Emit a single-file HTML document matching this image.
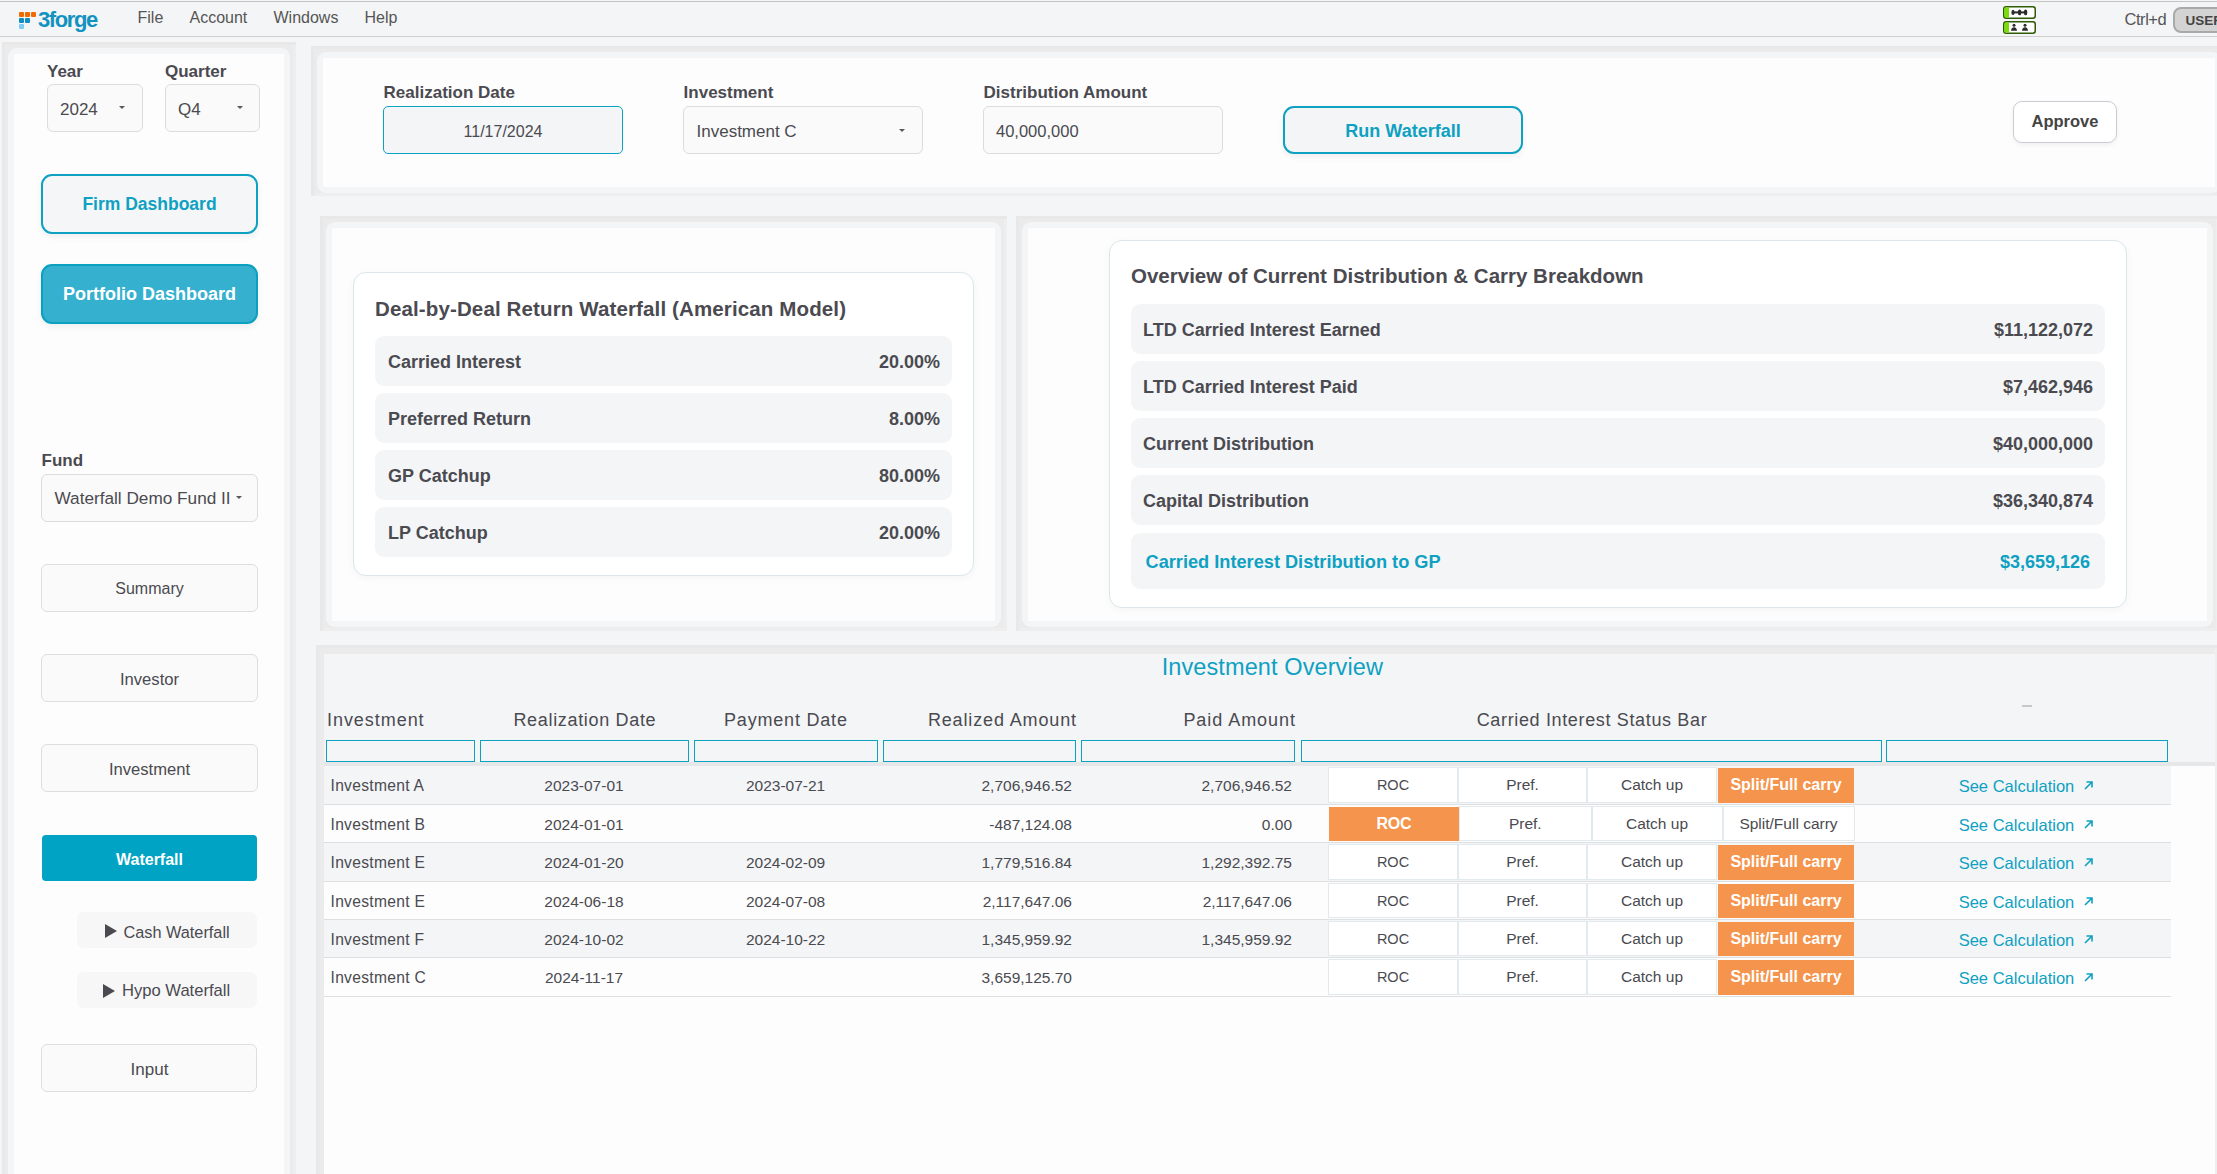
<!DOCTYPE html>
<html><head><meta charset="utf-8"><title>Waterfall</title>
<style>
html,body{margin:0;padding:0;}
body{width:2217px;height:1174px;overflow:hidden;position:relative;background:#f4f5f7;font-family:"Liberation Sans",sans-serif;}
.t{position:absolute;line-height:1;white-space:nowrap;}
</style></head><body>
<div style="position:absolute;left:0px;top:0px;width:2217px;height:36px;background:#f4f5f7;"></div>
<div style="position:absolute;left:0px;top:1px;width:2217px;height:1px;background:#c4c4c4;"></div>
<div style="position:absolute;left:0px;top:36px;width:2217px;height:1px;background:#cfcfcf;"></div>
<div style="position:absolute;left:19px;top:12px;width:5px;height:5px;background:#f06a00;border-radius:1px;"></div>
<div style="position:absolute;left:25px;top:12px;width:5px;height:5px;background:#f06a00;border-radius:1px;"></div>
<div style="position:absolute;left:31px;top:12px;width:5px;height:5px;background:#f06a00;border-radius:1px;"></div>
<div style="position:absolute;left:19px;top:18px;width:5px;height:5px;background:#0f8fbf;border-radius:1px;"></div>
<div style="position:absolute;left:25px;top:18px;width:5px;height:5px;background:#0f8fbf;border-radius:1px;"></div>
<div style="position:absolute;left:19px;top:24px;width:5px;height:5px;background:#7fcdf5;border-radius:1px;"></div>
<div class="t" style="left:38px;top:9.37px;font-size:22px;font-weight:700;color:#1192bf;letter-spacing:-1.4px;">3forge</div>
<div class="t" style="left:137.5px;top:9.95px;font-size:16px;font-weight:400;color:#555555;">File</div>
<div class="t" style="left:189.5px;top:9.95px;font-size:16px;font-weight:400;color:#555555;">Account</div>
<div class="t" style="left:273.5px;top:9.95px;font-size:16px;font-weight:400;color:#555555;">Windows</div>
<div class="t" style="left:364.5px;top:9.95px;font-size:16px;font-weight:400;color:#555555;">Help</div>
<div class="t" style="left:2124.5px;top:11.03px;font-size:16.5px;font-weight:400;color:#555555;letter-spacing:-0.45px;">Ctrl+d</div>
<div style="position:absolute;left:2173px;top:7px;width:67px;height:26px;background:#d3d3d3;border:2px solid #a9a9a9;border-radius:8px;box-sizing:border-box;"></div>
<div class="t" style="left:2185.5px;top:13.57px;font-size:13.5px;font-weight:700;color:#444444;">USER</div>
<svg style="position:absolute;left:2003px;top:6px" width="34" height="28" viewBox="0 0 34 28">
<rect x="0.75" y="0.75" width="31.5" height="11.5" rx="2.5" fill="#fff" stroke="#2f5a06" stroke-width="1.5"/>
<rect x="1.5" y="1.5" width="4.5" height="10" fill="#77e000"/>
<rect x="0.75" y="15.75" width="31.5" height="11.5" rx="2.5" fill="#fff" stroke="#2f5a06" stroke-width="1.5"/>
<rect x="1.5" y="16.5" width="4.5" height="10" fill="#77e000"/>
<rect x="9" y="5.4" width="15" height="2" fill="#2b2b2b"/>
<ellipse cx="10" cy="6.4" rx="1.6" ry="2.6" fill="#2b2b2b"/><ellipse cx="16.6" cy="6.4" rx="1.7" ry="2.9" fill="#2b2b2b"/><ellipse cx="22.6" cy="6.4" rx="1.7" ry="2.9" fill="#2b2b2b"/>
<circle cx="11" cy="19.2" r="1.5" fill="#2b2b2b"/><path d="M8 24.8 Q8.3 21.3 11 21.3 Q13.7 21.3 14 24.8 Z" fill="#2b2b2b"/>
<circle cx="22" cy="19.2" r="1.5" fill="#2b2b2b"/><path d="M19 24.8 Q19.3 21.3 22 21.3 Q24.7 21.3 25 24.8 Z" fill="#2b2b2b"/>
</svg>
<div style="position:absolute;left:2px;top:42px;width:294px;height:1148px;background:#ebebeb;border-style:solid;border-width:0;box-shadow:inset 3px 3px 0 #e8e8e8, inset -3px -3px 0 #eeeeee;"></div>
<div style="position:absolute;left:8px;top:48px;width:282px;height:1136px;background:#f4f5f7;border-radius:9px;"></div>
<div style="position:absolute;left:14px;top:54px;width:270px;height:1124px;background:#fdfdfd;"></div>
<div style="position:absolute;left:311px;top:46px;width:1916px;height:150px;background:#ebebeb;border-style:solid;border-width:0;box-shadow:inset 3px 3px 0 #e8e8e8, inset -3px -3px 0 #eeeeee;"></div>
<div style="position:absolute;left:317px;top:52px;width:1904px;height:141px;background:#f4f5f7;border-radius:9px;"></div>
<div style="position:absolute;left:323px;top:58px;width:1892px;height:129px;background:#fdfdfd;"></div>
<div style="position:absolute;left:320px;top:216px;width:687px;height:415px;background:#ebebeb;border-style:solid;border-width:0;box-shadow:inset 3px 3px 0 #e8e8e8, inset -3px -3px 0 #eeeeee;"></div>
<div style="position:absolute;left:326px;top:222px;width:675px;height:405px;background:#f4f5f7;border-radius:9px;"></div>
<div style="position:absolute;left:332px;top:228px;width:663px;height:393px;background:#fdfdfd;"></div>
<div style="position:absolute;left:1016px;top:216px;width:1203px;height:415px;background:#ebebeb;border-style:solid;border-width:0;box-shadow:inset 3px 3px 0 #e8e8e8, inset -3px -3px 0 #eeeeee;"></div>
<div style="position:absolute;left:1022px;top:222px;width:1191px;height:405px;background:#f4f5f7;border-radius:9px;"></div>
<div style="position:absolute;left:1028px;top:228px;width:1179px;height:393px;background:#fdfdfd;"></div>
<div style="position:absolute;left:316px;top:645px;width:1901px;height:545px;background:#ebebeb;border-style:solid;border-width:0;box-shadow:inset 3px 3px 0 #e8e8e8, inset -3px -3px 0 #eeeeee;"></div>
<div style="position:absolute;left:324px;top:654px;width:1891px;height:536px;background:#f4f5f7;"></div>
<div class="t" style="left:47px;top:62.61px;font-size:17px;font-weight:700;color:#4a4a50;">Year</div>
<div class="t" style="left:165px;top:62.61px;font-size:17px;font-weight:700;color:#4a4a50;">Quarter</div>
<div style="position:absolute;left:47px;top:84px;width:96px;height:48px;background:#fafafa;border:1px solid #dcdcdc;border-radius:6px;box-sizing:border-box;"></div>
<div class="t" style="left:60px;top:100.61px;font-size:17px;font-weight:400;color:#4a4a50;">2024</div>
<div style="position:absolute;left:119px;top:105.5px;width:0;height:0;border-left:3.1px solid transparent;border-right:3.1px solid transparent;border-top:3.4px solid #56565c;"></div>
<div style="position:absolute;left:165px;top:84px;width:95px;height:48px;background:#fafafa;border:1px solid #dcdcdc;border-radius:6px;box-sizing:border-box;"></div>
<div class="t" style="left:178px;top:100.61px;font-size:17px;font-weight:400;color:#4a4a50;">Q4</div>
<div style="position:absolute;left:237px;top:105.5px;width:0;height:0;border-left:3.1px solid transparent;border-right:3.1px solid transparent;border-top:3.4px solid #56565c;"></div>
<div style="position:absolute;left:41px;top:174px;width:217px;height:60px;background:#f5f6f8;border:2px solid #0ea1c2;border-radius:11px;box-sizing:border-box;box-shadow:0 3px 6px rgba(0,0,0,0.06);"></div>
<div class="t" style="left:-450.5px;width:1200px;text-align:center;top:196.18px;font-size:17.5px;font-weight:700;color:#0ea1c2;">Firm Dashboard</div>
<div style="position:absolute;left:41px;top:264px;width:217px;height:60px;background:#35b1cf;border:2px solid #0aa0c0;border-radius:11px;box-sizing:border-box;box-shadow:0 3px 6px rgba(0,0,0,0.06);"></div>
<div class="t" style="left:-450.5px;width:1200px;text-align:center;top:284.76px;font-size:18px;font-weight:700;color:#ffffff;">Portfolio Dashboard</div>
<div class="t" style="left:41.5px;top:451.61px;font-size:17px;font-weight:700;color:#4a4a50;">Fund</div>
<div style="position:absolute;left:41px;top:474px;width:217px;height:48px;background:#fafafa;border:1px solid #dcdcdc;border-radius:6px;box-sizing:border-box;"></div>
<div class="t" style="left:54.5px;top:490.44px;font-size:17.2px;font-weight:400;color:#4a4a50;">Waterfall Demo Fund II</div>
<div style="position:absolute;left:235.5px;top:496px;width:0;height:0;border-left:3.1px solid transparent;border-right:3.1px solid transparent;border-top:3.4px solid #56565c;"></div>
<div style="position:absolute;left:41px;top:564px;width:217px;height:48px;background:#fafafa;border:1px solid #dedede;border-radius:6px;box-sizing:border-box;"></div>
<div class="t" style="left:-450.5px;width:1200px;text-align:center;top:581.45px;font-size:16px;font-weight:400;color:#4a4a50;">Summary</div>
<div style="position:absolute;left:41px;top:654px;width:217px;height:48px;background:#fafafa;border:1px solid #dedede;border-radius:6px;box-sizing:border-box;"></div>
<div class="t" style="left:-450.5px;width:1200px;text-align:center;top:671.94px;font-size:16.6px;font-weight:400;color:#4a4a50;">Investor</div>
<div style="position:absolute;left:41px;top:744px;width:217px;height:48px;background:#fafafa;border:1px solid #dedede;border-radius:6px;box-sizing:border-box;"></div>
<div class="t" style="left:-450.5px;width:1200px;text-align:center;top:761.94px;font-size:16.6px;font-weight:400;color:#4a4a50;">Investment</div>
<div style="position:absolute;left:41px;top:1044px;width:216px;height:48px;background:#fafafa;border:1px solid #dedede;border-radius:6px;box-sizing:border-box;"></div>
<div class="t" style="left:-450.5px;width:1200px;text-align:center;top:1061.11px;font-size:17px;font-weight:400;color:#4a4a50;">Input</div>
<div style="position:absolute;left:42px;top:835px;width:215px;height:46px;background:#00a3c4;border-radius:4px;"></div>
<div class="t" style="left:-450.5px;width:1200px;text-align:center;top:851.95px;font-size:16px;font-weight:700;color:#ffffff;">Waterfall</div>
<div style="position:absolute;left:77px;top:912px;width:180px;height:36px;background:#f7f7f8;border-radius:7px;"></div>
<div style="position:absolute;left:105px;top:924px;width:0;height:0;border-top:7px solid transparent;border-bottom:7px solid transparent;border-left:12.5px solid #4a4a50;"></div>
<div class="t" style="left:123.5px;top:923.70px;font-size:16.3px;font-weight:400;color:#4a4a50;">Cash Waterfall</div>
<div style="position:absolute;left:77px;top:972px;width:180px;height:36px;background:#f7f7f8;border-radius:7px;"></div>
<div style="position:absolute;left:103px;top:984px;width:0;height:0;border-top:7px solid transparent;border-bottom:7px solid transparent;border-left:12.5px solid #4a4a50;"></div>
<div class="t" style="left:122px;top:983.44px;font-size:16.6px;font-weight:400;color:#4a4a50;">Hypo Waterfall</div>
<div class="t" style="left:383.6px;top:84.31px;font-size:17px;font-weight:700;color:#4a4a50;">Realization Date</div>
<div style="position:absolute;left:383px;top:106px;width:240px;height:48px;background:#f4f5f7;border:1px solid #0aa3c4;border-radius:5px;box-sizing:border-box;"></div>
<div class="t" style="left:-97px;width:1200px;text-align:center;top:123.95px;font-size:16px;font-weight:400;color:#4a4a50;">11/17/2024</div>
<div class="t" style="left:683.6px;top:84.31px;font-size:17px;font-weight:700;color:#4a4a50;">Investment</div>
<div style="position:absolute;left:683px;top:106px;width:240px;height:48px;background:#fafafa;border:1px solid #dcdcdc;border-radius:6px;box-sizing:border-box;"></div>
<div class="t" style="left:696.5px;top:122.61px;font-size:17px;font-weight:400;color:#4a4a50;">Investment C</div>
<div style="position:absolute;left:899px;top:128.5px;width:0;height:0;border-left:3.1px solid transparent;border-right:3.1px solid transparent;border-top:3.4px solid #56565c;"></div>
<div class="t" style="left:983.6px;top:84.31px;font-size:17px;font-weight:700;color:#4a4a50;">Distribution Amount</div>
<div style="position:absolute;left:983px;top:106px;width:240px;height:48px;background:#fafafa;border:1px solid #dcdcdc;border-radius:6px;box-sizing:border-box;"></div>
<div class="t" style="left:996px;top:123.03px;font-size:16.5px;font-weight:400;color:#4a4a50;">40,000,000</div>
<div style="position:absolute;left:1283px;top:106px;width:240px;height:48px;background:#f4f5f7;border:2px solid #0ea1c2;border-radius:11px;box-sizing:border-box;box-shadow:0 3px 6px rgba(0,0,0,0.06);"></div>
<div class="t" style="left:803px;width:1200px;text-align:center;top:121.76px;font-size:18px;font-weight:700;color:#0ea1c2;">Run Waterfall</div>
<div style="position:absolute;left:2013px;top:101px;width:104px;height:42px;background:#ffffff;border:1px solid #c9cdd3;border-radius:9px;box-sizing:border-box;box-shadow:0 2px 5px rgba(0,0,0,0.06);"></div>
<div class="t" style="left:1465px;width:1200px;text-align:center;top:113.03px;font-size:16.5px;font-weight:700;color:#444444;">Approve</div>
<div style="position:absolute;left:353px;top:272px;width:621px;height:304px;background:#ffffff;border:1px solid #dbe7eb;border-radius:13px;box-sizing:border-box;box-shadow:0 2px 8px rgba(0,0,0,0.04);"></div>
<div class="t" style="left:375px;top:298.64px;font-size:20.5px;font-weight:700;color:#4a4a50;letter-spacing:0.13px;">Deal-by-Deal Return Waterfall (American Model)</div>
<div style="position:absolute;left:375px;top:336px;width:577px;height:50px;background:#f4f5f7;border-radius:9px;"></div>
<div class="t" style="left:388px;top:353.26px;font-size:18px;font-weight:700;color:#4a4a50;">Carried Interest</div>
<div class="t" style="left:-260px;width:1200px;text-align:right;top:353.26px;font-size:18px;font-weight:700;color:#4a4a50;">20.00%</div>
<div style="position:absolute;left:375px;top:393px;width:577px;height:50px;background:#f4f5f7;border-radius:9px;"></div>
<div class="t" style="left:388px;top:410.26px;font-size:18px;font-weight:700;color:#4a4a50;">Preferred Return</div>
<div class="t" style="left:-260px;width:1200px;text-align:right;top:410.26px;font-size:18px;font-weight:700;color:#4a4a50;">8.00%</div>
<div style="position:absolute;left:375px;top:450px;width:577px;height:50px;background:#f4f5f7;border-radius:9px;"></div>
<div class="t" style="left:388px;top:467.26px;font-size:18px;font-weight:700;color:#4a4a50;">GP Catchup</div>
<div class="t" style="left:-260px;width:1200px;text-align:right;top:467.26px;font-size:18px;font-weight:700;color:#4a4a50;">80.00%</div>
<div style="position:absolute;left:375px;top:507px;width:577px;height:50px;background:#f4f5f7;border-radius:9px;"></div>
<div class="t" style="left:388px;top:524.26px;font-size:18px;font-weight:700;color:#4a4a50;">LP Catchup</div>
<div class="t" style="left:-260px;width:1200px;text-align:right;top:524.26px;font-size:18px;font-weight:700;color:#4a4a50;">20.00%</div>
<div style="position:absolute;left:1109px;top:240px;width:1018px;height:368px;background:#ffffff;border:1px solid #dbe7eb;border-radius:13px;box-sizing:border-box;box-shadow:0 2px 8px rgba(0,0,0,0.04);"></div>
<div class="t" style="left:1131px;top:266.14px;font-size:20.5px;font-weight:700;color:#4a4a50;">Overview of Current Distribution &amp; Carry Breakdown</div>
<div style="position:absolute;left:1131px;top:304px;width:974px;height:50px;background:#f4f5f7;border-radius:9px;"></div>
<div class="t" style="left:1143px;top:321.26px;font-size:18px;font-weight:700;color:#4a4a50;">LTD Carried Interest Earned</div>
<div class="t" style="left:893px;width:1200px;text-align:right;top:321.26px;font-size:18px;font-weight:700;color:#4a4a50;">$11,122,072</div>
<div style="position:absolute;left:1131px;top:361px;width:974px;height:50px;background:#f4f5f7;border-radius:9px;"></div>
<div class="t" style="left:1143px;top:378.26px;font-size:18px;font-weight:700;color:#4a4a50;">LTD Carried Interest Paid</div>
<div class="t" style="left:893px;width:1200px;text-align:right;top:378.26px;font-size:18px;font-weight:700;color:#4a4a50;">$7,462,946</div>
<div style="position:absolute;left:1131px;top:418px;width:974px;height:50px;background:#f4f5f7;border-radius:9px;"></div>
<div class="t" style="left:1143px;top:435.26px;font-size:18px;font-weight:700;color:#4a4a50;">Current Distribution</div>
<div class="t" style="left:893px;width:1200px;text-align:right;top:435.26px;font-size:18px;font-weight:700;color:#4a4a50;">$40,000,000</div>
<div style="position:absolute;left:1131px;top:475px;width:974px;height:50px;background:#f4f5f7;border-radius:9px;"></div>
<div class="t" style="left:1143px;top:492.26px;font-size:18px;font-weight:700;color:#4a4a50;">Capital Distribution</div>
<div class="t" style="left:893px;width:1200px;text-align:right;top:492.26px;font-size:18px;font-weight:700;color:#4a4a50;">$36,340,874</div>
<div style="position:absolute;left:1131px;top:533px;width:974px;height:56px;background:#f4f5f7;border-radius:9px;"></div>
<div class="t" style="left:1145.5px;top:553.09px;font-size:18.2px;font-weight:700;color:#0ea1c2;">Carried Interest Distribution to GP</div>
<div class="t" style="left:890px;width:1200px;text-align:right;top:553.26px;font-size:18px;font-weight:700;color:#0ea1c2;">$3,659,126</div>
<div class="t" style="left:672.3499999999999px;width:1200px;text-align:center;top:655.60px;font-size:23.5px;font-weight:400;color:#0ea1c2;letter-spacing:0.1px;">Investment Overview</div>
<div class="t" style="left:327px;top:710.76px;font-size:18px;font-weight:400;color:#4a4a50;letter-spacing:0.95px;">Investment</div>
<div class="t" style="left:-15.164999999999964px;width:1200px;text-align:center;top:710.76px;font-size:18px;font-weight:400;color:#4a4a50;letter-spacing:0.67px;">Realization Date</div>
<div class="t" style="left:185.89999999999998px;width:1200px;text-align:center;top:710.76px;font-size:18px;font-weight:400;color:#4a4a50;letter-spacing:0.8px;">Payment Date</div>
<div class="t" style="left:-123.1400000000001px;width:1200px;text-align:right;top:710.76px;font-size:18px;font-weight:400;color:#4a4a50;letter-spacing:0.86px;">Realized Amount</div>
<div class="t" style="left:95.95000000000005px;width:1200px;text-align:right;top:710.76px;font-size:18px;font-weight:400;color:#4a4a50;letter-spacing:0.95px;">Paid Amount</div>
<div class="t" style="left:992.0250000000001px;width:1200px;text-align:center;top:710.76px;font-size:18px;font-weight:400;color:#4a4a50;letter-spacing:0.65px;">Carried Interest Status Bar</div>
<div style="position:absolute;left:2022px;top:705px;width:10px;height:1.5px;background:#c8c8c8;"></div>
<div style="position:absolute;left:326px;top:740px;width:149px;height:22px;border:1.25px solid #0ea1c2;box-sizing:border-box;"></div>
<div style="position:absolute;left:480px;top:740px;width:209px;height:22px;border:1.25px solid #0ea1c2;box-sizing:border-box;"></div>
<div style="position:absolute;left:694px;top:740px;width:184px;height:22px;border:1.25px solid #0ea1c2;box-sizing:border-box;"></div>
<div style="position:absolute;left:883px;top:740px;width:193px;height:22px;border:1.25px solid #0ea1c2;box-sizing:border-box;"></div>
<div style="position:absolute;left:1081px;top:740px;width:214px;height:22px;border:1.25px solid #0ea1c2;box-sizing:border-box;"></div>
<div style="position:absolute;left:1301px;top:740px;width:581px;height:22px;border:1.25px solid #0ea1c2;box-sizing:border-box;"></div>
<div style="position:absolute;left:1886px;top:740px;width:282px;height:22px;border:1.25px solid #0ea1c2;box-sizing:border-box;"></div>
<div style="position:absolute;left:324px;top:762px;width:1891px;height:4px;background:#e6e7e9;"></div>
<div style="position:absolute;left:324px;top:766px;width:1891px;height:424px;background:#fdfdfd;"></div>
<div style="position:absolute;left:324px;top:766px;width:1847px;height:38px;background:#f4f5f7;"></div>
<div style="position:absolute;left:324px;top:804px;width:1847px;height:1px;background:#dedfe1;"></div>
<div class="t" style="left:330.5px;top:777.79px;font-size:15.6px;font-weight:400;color:#4a4a50;letter-spacing:0.3px;">Investment A</div>
<div class="t" style="left:-16px;width:1200px;text-align:center;top:777.88px;font-size:15.5px;font-weight:400;color:#4a4a50;">2023-07-01</div>
<div class="t" style="left:185.60000000000002px;width:1200px;text-align:center;top:777.88px;font-size:15.5px;font-weight:400;color:#4a4a50;">2023-07-21</div>
<div class="t" style="left:-128px;width:1200px;text-align:right;top:777.88px;font-size:15.5px;font-weight:400;color:#4a4a50;">2,706,946.52</div>
<div class="t" style="left:92px;width:1200px;text-align:right;top:777.88px;font-size:15.5px;font-weight:400;color:#4a4a50;">2,706,946.52</div>
<div style="position:absolute;left:1328px;top:767px;width:130px;height:36px;background:#ffffff;border:1px solid #e3eaee;box-sizing:border-box;"></div>
<div class="t" style="left:793.0px;width:1200px;text-align:center;top:777.72px;font-size:14.5px;font-weight:400;color:#4a4a50;">ROC</div>
<div style="position:absolute;left:1458px;top:767px;width:129px;height:36px;background:#ffffff;border:1px solid #e3eaee;box-sizing:border-box;"></div>
<div class="t" style="left:922.5px;width:1200px;text-align:center;top:776.88px;font-size:15.5px;font-weight:400;color:#4a4a50;">Pref.</div>
<div style="position:absolute;left:1587px;top:767px;width:130px;height:36px;background:#ffffff;border:1px solid #e3eaee;box-sizing:border-box;"></div>
<div class="t" style="left:1052.0px;width:1200px;text-align:center;top:776.88px;font-size:15.5px;font-weight:400;color:#4a4a50;">Catch up</div>
<div style="position:absolute;left:1718px;top:767.5px;width:136px;height:35.5px;background:#f5944c;"></div>
<div class="t" style="left:1186.0px;width:1200px;text-align:center;top:777.45px;font-size:16px;font-weight:700;color:#ffffff;">Split/Full carry</div>
<div class="t" style="left:1958.7px;top:778.03px;font-size:16.5px;font-weight:400;color:#0ea1c2;">See Calculation</div>
<svg style="position:absolute;left:2083px;top:780px" width="11" height="11" viewBox="0 0 11 11"><path d="M2 9 L9 2 M3.5 2 H9 V7.5" fill="none" stroke="#0ea1c2" stroke-width="1.6"/></svg>
<div style="position:absolute;left:324px;top:805px;width:1847px;height:37px;background:#fdfdfd;"></div>
<div style="position:absolute;left:324px;top:842px;width:1847px;height:1px;background:#dedfe1;"></div>
<div class="t" style="left:330.5px;top:816.79px;font-size:15.6px;font-weight:400;color:#4a4a50;letter-spacing:0.3px;">Investment B</div>
<div class="t" style="left:-16px;width:1200px;text-align:center;top:816.88px;font-size:15.5px;font-weight:400;color:#4a4a50;">2024-01-01</div>
<div class="t" style="left:-128px;width:1200px;text-align:right;top:816.88px;font-size:15.5px;font-weight:400;color:#4a4a50;">-487,124.08</div>
<div class="t" style="left:92px;width:1200px;text-align:right;top:816.88px;font-size:15.5px;font-weight:400;color:#4a4a50;">0.00</div>
<div style="position:absolute;left:1329px;top:806.5px;width:130px;height:34.5px;background:#f5944c;"></div>
<div class="t" style="left:794.0px;width:1200px;text-align:center;top:816.45px;font-size:16px;font-weight:700;color:#ffffff;letter-spacing:-0.2px;">ROC</div>
<div style="position:absolute;left:1459px;top:806px;width:132.5px;height:35px;background:#ffffff;border:1px solid #e3eaee;box-sizing:border-box;"></div>
<div class="t" style="left:925.25px;width:1200px;text-align:center;top:815.88px;font-size:15.5px;font-weight:400;color:#4a4a50;">Pref.</div>
<div style="position:absolute;left:1591.5px;top:806px;width:131.0px;height:35px;background:#ffffff;border:1px solid #e3eaee;box-sizing:border-box;"></div>
<div class="t" style="left:1057.0px;width:1200px;text-align:center;top:815.88px;font-size:15.5px;font-weight:400;color:#4a4a50;">Catch up</div>
<div style="position:absolute;left:1722.5px;top:806px;width:132.0px;height:35px;background:#ffffff;border:1px solid #e3eaee;box-sizing:border-box;"></div>
<div class="t" style="left:1188.5px;width:1200px;text-align:center;top:815.88px;font-size:15.5px;font-weight:400;color:#4a4a50;">Split/Full carry</div>
<div class="t" style="left:1958.7px;top:817.03px;font-size:16.5px;font-weight:400;color:#0ea1c2;">See Calculation</div>
<svg style="position:absolute;left:2083px;top:819px" width="11" height="11" viewBox="0 0 11 11"><path d="M2 9 L9 2 M3.5 2 H9 V7.5" fill="none" stroke="#0ea1c2" stroke-width="1.6"/></svg>
<div style="position:absolute;left:324px;top:843px;width:1847px;height:38px;background:#f4f5f7;"></div>
<div style="position:absolute;left:324px;top:881px;width:1847px;height:1px;background:#dedfe1;"></div>
<div class="t" style="left:330.5px;top:854.79px;font-size:15.6px;font-weight:400;color:#4a4a50;letter-spacing:0.3px;">Investment E</div>
<div class="t" style="left:-16px;width:1200px;text-align:center;top:854.88px;font-size:15.5px;font-weight:400;color:#4a4a50;">2024-01-20</div>
<div class="t" style="left:185.60000000000002px;width:1200px;text-align:center;top:854.88px;font-size:15.5px;font-weight:400;color:#4a4a50;">2024-02-09</div>
<div class="t" style="left:-128px;width:1200px;text-align:right;top:854.88px;font-size:15.5px;font-weight:400;color:#4a4a50;">1,779,516.84</div>
<div class="t" style="left:92px;width:1200px;text-align:right;top:854.88px;font-size:15.5px;font-weight:400;color:#4a4a50;">1,292,392.75</div>
<div style="position:absolute;left:1328px;top:844px;width:130px;height:36px;background:#ffffff;border:1px solid #e3eaee;box-sizing:border-box;"></div>
<div class="t" style="left:793.0px;width:1200px;text-align:center;top:854.72px;font-size:14.5px;font-weight:400;color:#4a4a50;">ROC</div>
<div style="position:absolute;left:1458px;top:844px;width:129px;height:36px;background:#ffffff;border:1px solid #e3eaee;box-sizing:border-box;"></div>
<div class="t" style="left:922.5px;width:1200px;text-align:center;top:853.88px;font-size:15.5px;font-weight:400;color:#4a4a50;">Pref.</div>
<div style="position:absolute;left:1587px;top:844px;width:130px;height:36px;background:#ffffff;border:1px solid #e3eaee;box-sizing:border-box;"></div>
<div class="t" style="left:1052.0px;width:1200px;text-align:center;top:853.88px;font-size:15.5px;font-weight:400;color:#4a4a50;">Catch up</div>
<div style="position:absolute;left:1718px;top:844.5px;width:136px;height:35.5px;background:#f5944c;"></div>
<div class="t" style="left:1186.0px;width:1200px;text-align:center;top:854.45px;font-size:16px;font-weight:700;color:#ffffff;">Split/Full carry</div>
<div class="t" style="left:1958.7px;top:855.03px;font-size:16.5px;font-weight:400;color:#0ea1c2;">See Calculation</div>
<svg style="position:absolute;left:2083px;top:857px" width="11" height="11" viewBox="0 0 11 11"><path d="M2 9 L9 2 M3.5 2 H9 V7.5" fill="none" stroke="#0ea1c2" stroke-width="1.6"/></svg>
<div style="position:absolute;left:324px;top:882px;width:1847px;height:37px;background:#fdfdfd;"></div>
<div style="position:absolute;left:324px;top:919px;width:1847px;height:1px;background:#dedfe1;"></div>
<div class="t" style="left:330.5px;top:893.79px;font-size:15.6px;font-weight:400;color:#4a4a50;letter-spacing:0.3px;">Investment E</div>
<div class="t" style="left:-16px;width:1200px;text-align:center;top:893.88px;font-size:15.5px;font-weight:400;color:#4a4a50;">2024-06-18</div>
<div class="t" style="left:185.60000000000002px;width:1200px;text-align:center;top:893.88px;font-size:15.5px;font-weight:400;color:#4a4a50;">2024-07-08</div>
<div class="t" style="left:-128px;width:1200px;text-align:right;top:893.88px;font-size:15.5px;font-weight:400;color:#4a4a50;">2,117,647.06</div>
<div class="t" style="left:92px;width:1200px;text-align:right;top:893.88px;font-size:15.5px;font-weight:400;color:#4a4a50;">2,117,647.06</div>
<div style="position:absolute;left:1328px;top:883px;width:130px;height:35px;background:#ffffff;border:1px solid #e3eaee;box-sizing:border-box;"></div>
<div class="t" style="left:793.0px;width:1200px;text-align:center;top:893.72px;font-size:14.5px;font-weight:400;color:#4a4a50;">ROC</div>
<div style="position:absolute;left:1458px;top:883px;width:129px;height:35px;background:#ffffff;border:1px solid #e3eaee;box-sizing:border-box;"></div>
<div class="t" style="left:922.5px;width:1200px;text-align:center;top:892.88px;font-size:15.5px;font-weight:400;color:#4a4a50;">Pref.</div>
<div style="position:absolute;left:1587px;top:883px;width:130px;height:35px;background:#ffffff;border:1px solid #e3eaee;box-sizing:border-box;"></div>
<div class="t" style="left:1052.0px;width:1200px;text-align:center;top:892.88px;font-size:15.5px;font-weight:400;color:#4a4a50;">Catch up</div>
<div style="position:absolute;left:1718px;top:883.5px;width:136px;height:34.5px;background:#f5944c;"></div>
<div class="t" style="left:1186.0px;width:1200px;text-align:center;top:893.45px;font-size:16px;font-weight:700;color:#ffffff;">Split/Full carry</div>
<div class="t" style="left:1958.7px;top:894.03px;font-size:16.5px;font-weight:400;color:#0ea1c2;">See Calculation</div>
<svg style="position:absolute;left:2083px;top:896px" width="11" height="11" viewBox="0 0 11 11"><path d="M2 9 L9 2 M3.5 2 H9 V7.5" fill="none" stroke="#0ea1c2" stroke-width="1.6"/></svg>
<div style="position:absolute;left:324px;top:920px;width:1847px;height:37px;background:#f4f5f7;"></div>
<div style="position:absolute;left:324px;top:957px;width:1847px;height:1px;background:#dedfe1;"></div>
<div class="t" style="left:330.5px;top:931.79px;font-size:15.6px;font-weight:400;color:#4a4a50;letter-spacing:0.3px;">Investment F</div>
<div class="t" style="left:-16px;width:1200px;text-align:center;top:931.88px;font-size:15.5px;font-weight:400;color:#4a4a50;">2024-10-02</div>
<div class="t" style="left:185.60000000000002px;width:1200px;text-align:center;top:931.88px;font-size:15.5px;font-weight:400;color:#4a4a50;">2024-10-22</div>
<div class="t" style="left:-128px;width:1200px;text-align:right;top:931.88px;font-size:15.5px;font-weight:400;color:#4a4a50;">1,345,959.92</div>
<div class="t" style="left:92px;width:1200px;text-align:right;top:931.88px;font-size:15.5px;font-weight:400;color:#4a4a50;">1,345,959.92</div>
<div style="position:absolute;left:1328px;top:921px;width:130px;height:35px;background:#ffffff;border:1px solid #e3eaee;box-sizing:border-box;"></div>
<div class="t" style="left:793.0px;width:1200px;text-align:center;top:931.72px;font-size:14.5px;font-weight:400;color:#4a4a50;">ROC</div>
<div style="position:absolute;left:1458px;top:921px;width:129px;height:35px;background:#ffffff;border:1px solid #e3eaee;box-sizing:border-box;"></div>
<div class="t" style="left:922.5px;width:1200px;text-align:center;top:930.88px;font-size:15.5px;font-weight:400;color:#4a4a50;">Pref.</div>
<div style="position:absolute;left:1587px;top:921px;width:130px;height:35px;background:#ffffff;border:1px solid #e3eaee;box-sizing:border-box;"></div>
<div class="t" style="left:1052.0px;width:1200px;text-align:center;top:930.88px;font-size:15.5px;font-weight:400;color:#4a4a50;">Catch up</div>
<div style="position:absolute;left:1718px;top:921.5px;width:136px;height:34.5px;background:#f5944c;"></div>
<div class="t" style="left:1186.0px;width:1200px;text-align:center;top:931.45px;font-size:16px;font-weight:700;color:#ffffff;">Split/Full carry</div>
<div class="t" style="left:1958.7px;top:932.03px;font-size:16.5px;font-weight:400;color:#0ea1c2;">See Calculation</div>
<svg style="position:absolute;left:2083px;top:934px" width="11" height="11" viewBox="0 0 11 11"><path d="M2 9 L9 2 M3.5 2 H9 V7.5" fill="none" stroke="#0ea1c2" stroke-width="1.6"/></svg>
<div style="position:absolute;left:324px;top:958px;width:1847px;height:38px;background:#fdfdfd;"></div>
<div style="position:absolute;left:324px;top:996px;width:1847px;height:1px;background:#dedfe1;"></div>
<div class="t" style="left:330.5px;top:969.79px;font-size:15.6px;font-weight:400;color:#4a4a50;letter-spacing:0.3px;">Investment C</div>
<div class="t" style="left:-16px;width:1200px;text-align:center;top:969.88px;font-size:15.5px;font-weight:400;color:#4a4a50;">2024-11-17</div>
<div class="t" style="left:-128px;width:1200px;text-align:right;top:969.88px;font-size:15.5px;font-weight:400;color:#4a4a50;">3,659,125.70</div>
<div style="position:absolute;left:1328px;top:959px;width:130px;height:36px;background:#ffffff;border:1px solid #e3eaee;box-sizing:border-box;"></div>
<div class="t" style="left:793.0px;width:1200px;text-align:center;top:969.72px;font-size:14.5px;font-weight:400;color:#4a4a50;">ROC</div>
<div style="position:absolute;left:1458px;top:959px;width:129px;height:36px;background:#ffffff;border:1px solid #e3eaee;box-sizing:border-box;"></div>
<div class="t" style="left:922.5px;width:1200px;text-align:center;top:968.88px;font-size:15.5px;font-weight:400;color:#4a4a50;">Pref.</div>
<div style="position:absolute;left:1587px;top:959px;width:130px;height:36px;background:#ffffff;border:1px solid #e3eaee;box-sizing:border-box;"></div>
<div class="t" style="left:1052.0px;width:1200px;text-align:center;top:968.88px;font-size:15.5px;font-weight:400;color:#4a4a50;">Catch up</div>
<div style="position:absolute;left:1718px;top:959.5px;width:136px;height:35.5px;background:#f5944c;"></div>
<div class="t" style="left:1186.0px;width:1200px;text-align:center;top:969.45px;font-size:16px;font-weight:700;color:#ffffff;">Split/Full carry</div>
<div class="t" style="left:1958.7px;top:970.03px;font-size:16.5px;font-weight:400;color:#0ea1c2;">See Calculation</div>
<svg style="position:absolute;left:2083px;top:972px" width="11" height="11" viewBox="0 0 11 11"><path d="M2 9 L9 2 M3.5 2 H9 V7.5" fill="none" stroke="#0ea1c2" stroke-width="1.6"/></svg>
</body></html>
